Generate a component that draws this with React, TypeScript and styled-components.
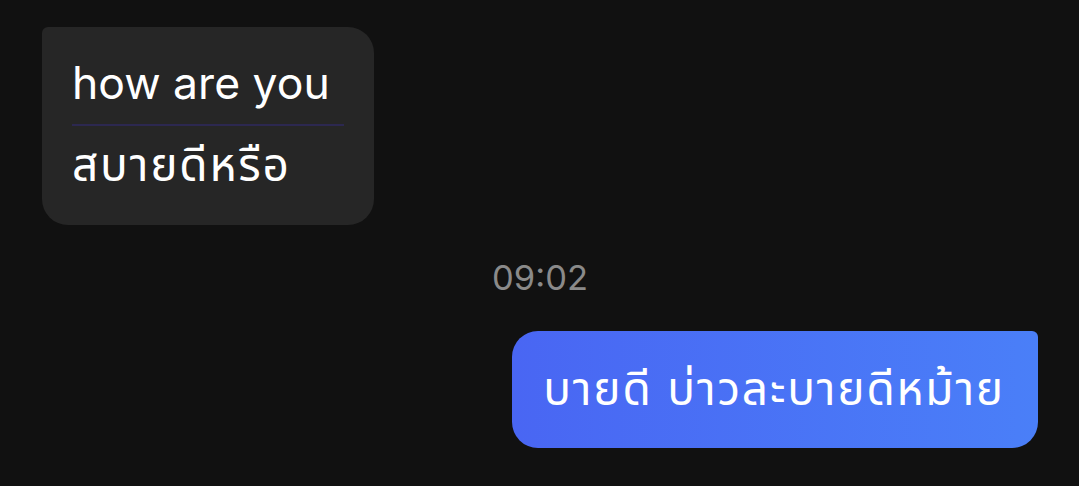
import React from "react";
import styled, { createGlobalStyle } from "styled-components";

const GlobalStyle = createGlobalStyle`
  html, body {
    margin: 0;
    padding: 0;
    background: #111111;
  }
  body {
    font-family: Inter, "Noto Sans", "Noto Sans Thai", "DejaVu Sans", sans-serif;
    color: #ffffff;
  }
`;

interface BubbleProps {
  $outgoing?: boolean;
}

const Thread = styled.div`
  display: flex;
  flex-direction: column;
  width: 1079px;
  height: 486px;
  box-sizing: border-box;
  padding: 27px 41px 0 42px;
  overflow: hidden;
`;

const Bubble = styled.div<BubbleProps>`
  box-sizing: border-box;
  align-self: ${props => (props.$outgoing ? "flex-end" : "flex-start")};
  border-radius: ${props => (props.$outgoing ? "26px 6px 26px 26px" : "6px 26px 26px 26px")};
  background: ${props =>
    props.$outgoing ? "linear-gradient(90deg, #4966f3 0%, #4a7ff8 100%)" : "#262626"};
`;

const IncomingBubble = styled(Bubble)`
  width: 332px;
  padding: 28px 30px 32px 30px;
`;

const OutgoingBubble = styled(Bubble)`
  padding: 29px 33px 31px 31px;
`;

const Line = styled.div`
  font-size: 44.5px;
  line-height: 56px;
  white-space: nowrap;
`;

const Thai = styled.span`
  font-size: 46px;
  letter-spacing: 1.8px;
`;

const Divider = styled.div`
  height: 2px;
  margin: 13px 0 10px;
  background: #2c2850;
`;

const Timestamp = styled.div`
  align-self: center;
  margin: 33px 0 33px;
  font-size: 34.5px;
  line-height: 40px;
  color: #8a8a8a;
`;

const App: Function = () => {
  return (
    <>
      <GlobalStyle />
      <Thread>
        <IncomingBubble>
          <Line>how are you</Line>
          <Divider />
          <Line>
            <Thai>สบายดีหรือ</Thai>
          </Line>
        </IncomingBubble>
        <Timestamp>09:02</Timestamp>
        <OutgoingBubble $outgoing>
          <Line>
            <Thai>บายดี บ่าวละบายดีหม้าย</Thai>
          </Line>
        </OutgoingBubble>
      </Thread>
    </>
  );
};

export default App;
